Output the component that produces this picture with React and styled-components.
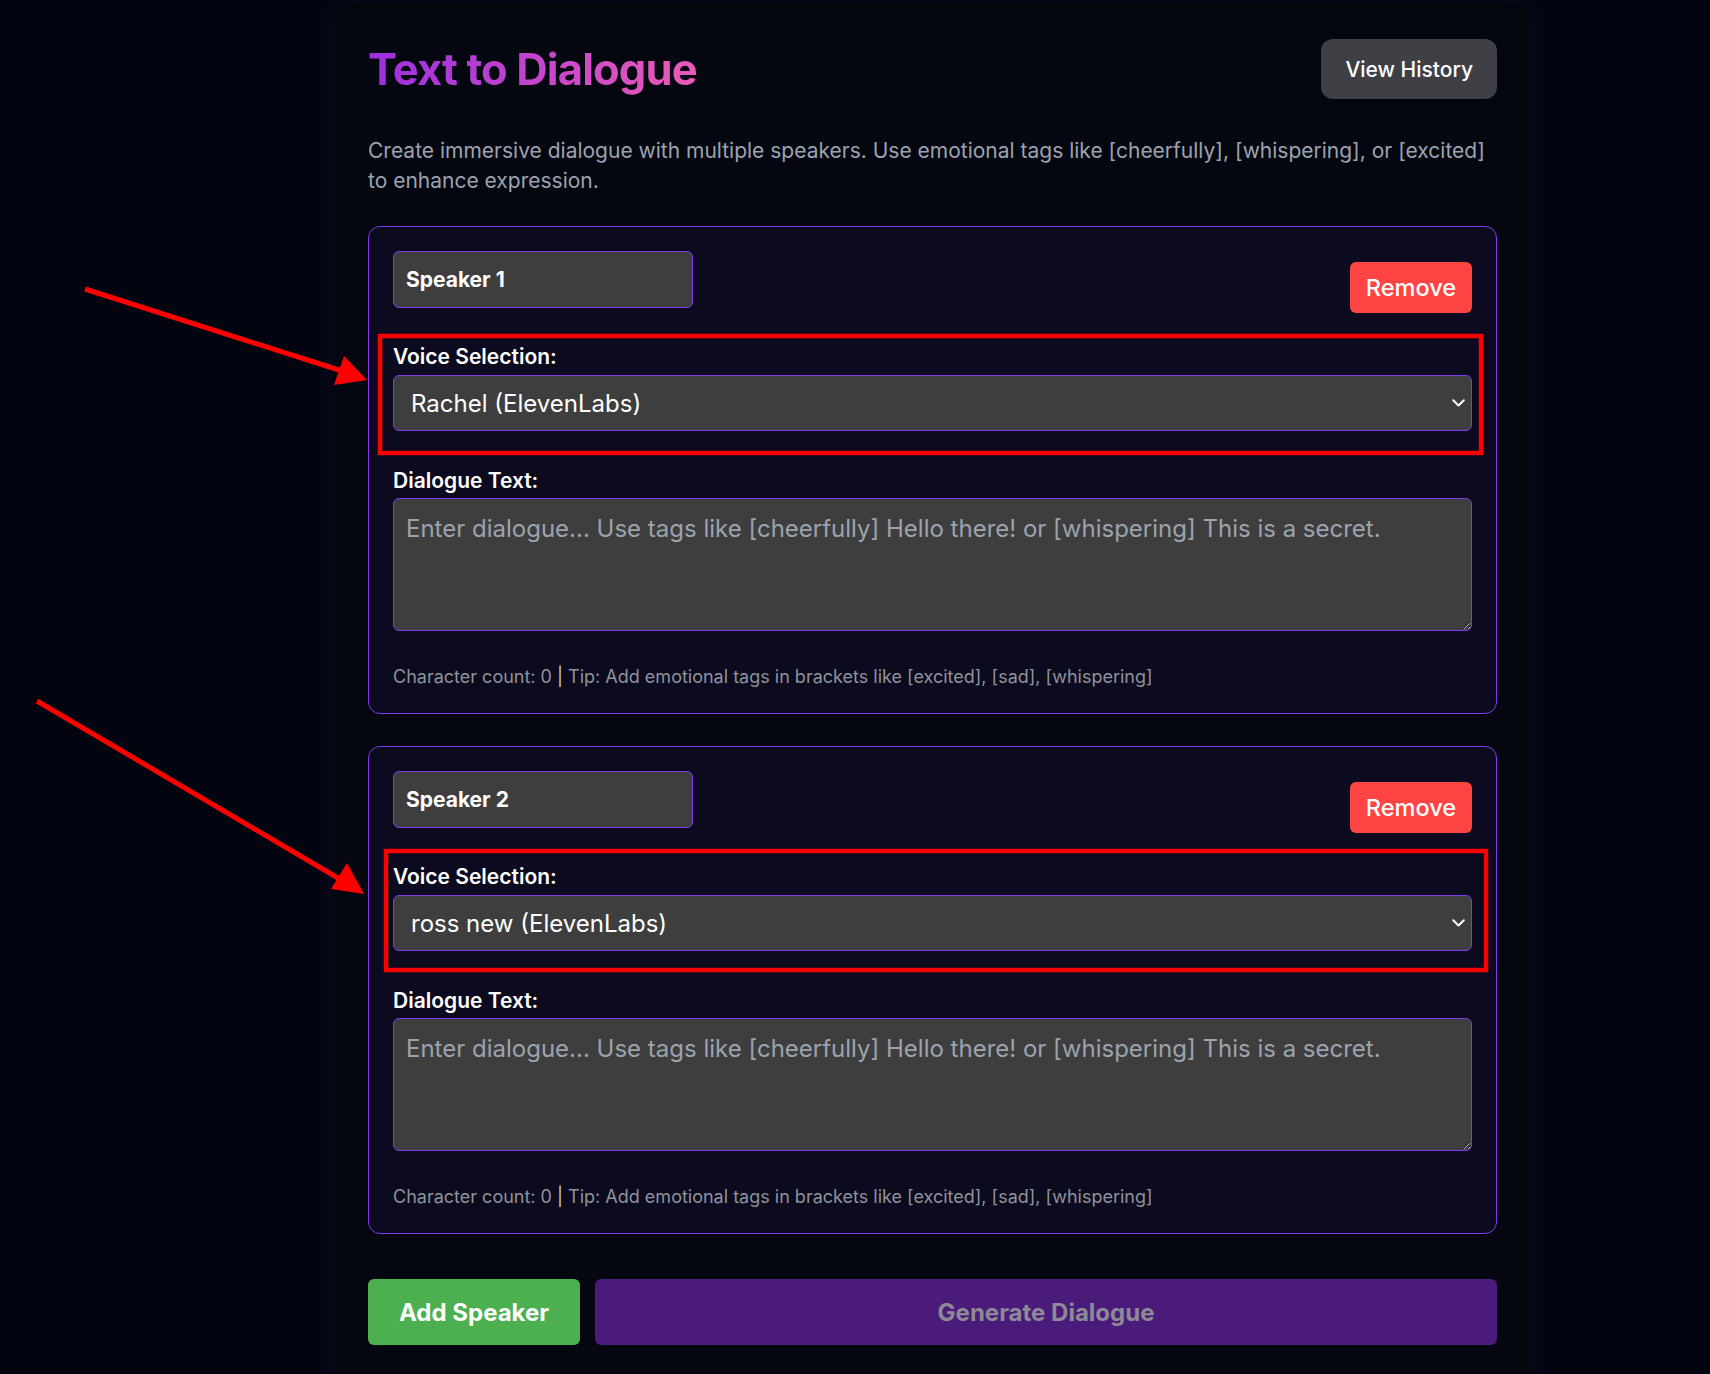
import React, { useState } from 'react'
import styled, { createGlobalStyle } from 'styled-components'

const voices = ['Rachel (ElevenLabs)', 'ross new (ElevenLabs)', 'Adam (ElevenLabs)', 'Bella (ElevenLabs)']
const placeholder = 'Enter dialogue... Use tags like [cheerfully] Hello there! or [whispering] This is a secret.'

function App() {
  const [speakers, setSpeakers] = useState([
    { id: 1, name: 'Speaker 1', voice: voices[0], text: '' },
    { id: 2, name: 'Speaker 2', voice: voices[1], text: '' },
  ])

  const update = (id, key, value) =>
    setSpeakers(speakers.map((s) => (s.id === id ? { ...s, [key]: value } : s)))

  const addSpeaker = () => {
    const id = speakers.length ? Math.max(...speakers.map((s) => s.id)) + 1 : 1
    setSpeakers([...speakers, { id, name: `Speaker ${id}`, voice: voices[0], text: '' }])
  }

  const canGenerate = speakers.some((s) => s.text.trim().length > 0)

  return (
    <Page>
      <GlobalStyle />
      <Panel>
        <Header>
          <Title>Text to Dialogue</Title>
          <HistoryButton>View History</HistoryButton>
        </Header>
        <Intro>
          Create immersive dialogue with multiple speakers. Use emotional tags like [cheerfully], [whispering], or [excited] to enhance expression.
        </Intro>

        {speakers.map((s) => (
          <SpeakerCard key={s.id}>
            <CardHeader>
              <NameInput value={s.name} onChange={(e) => update(s.id, 'name', e.target.value)} />
              <RemoveButton onClick={() => setSpeakers(speakers.filter((x) => x.id !== s.id))}>
                Remove
              </RemoveButton>
            </CardHeader>

            <Field $gap={38}>
              <Label>Voice Selection:</Label>
              <SelectWrap>
                <Select value={s.voice} onChange={(e) => update(s.id, 'voice', e.target.value)}>
                  {voices.map((v) => (
                    <option key={v}>{v}</option>
                  ))}
                </Select>
                <Chevron width="13" height="8" viewBox="0 0 13 8">
                  <path d="M1.2 1.2l5.3 5.3 5.3-5.3" fill="none" stroke="#fff" strokeWidth="2" strokeLinecap="round" strokeLinejoin="round" />
                </Chevron>
              </SelectWrap>
            </Field>

            <Field $gap={0}>
              <Label $tight>Dialogue Text:</Label>
              <TextArea
                placeholder={placeholder}
                value={s.text}
                onChange={(e) => update(s.id, 'text', e.target.value)}
              />
            </Field>

            <CharCount>
              Character count: {s.text.length} <Sep>|</Sep> Tip: Add emotional tags in brackets like [excited], [sad], [whispering]
            </CharCount>
          </SpeakerCard>
        ))}

        <Actions>
          <AddButton onClick={addSpeaker}>Add Speaker</AddButton>
          <GenerateButton disabled={!canGenerate}>Generate Dialogue</GenerateButton>
        </Actions>
      </Panel>

      {/* red annotation marks drawn on top of the screenshot */}
      <Marks viewBox="0 0 1710 1374">
        <rect x="380" y="336" width="1101" height="117" fill="none" stroke="#ff0000" strokeWidth="4.5" />
        <rect x="386" y="851" width="1100" height="119" fill="none" stroke="#ff0000" strokeWidth="4.5" />
        <line x1="85" y1="289" x2="342" y2="371" stroke="#ff0000" strokeWidth="5" />
        <polygon points="367,380 334,385 344,356" fill="#ff0000" />
        <line x1="37" y1="701" x2="343" y2="881" stroke="#ff0000" strokeWidth="5" />
        <polygon points="364,894 331,889 347,863" fill="#ff0000" />
      </Marks>
    </Page>
  )
}

export default App

const GlobalStyle = createGlobalStyle`
  html, body {
    margin: 0;
    padding: 0;
    background: #02050f;
  }
  body {
    font-family: Inter, "Noto Sans", sans-serif;
    color: #fff;
  }
  * {
    box-sizing: border-box;
  }
`

const Page = styled.div`
  position: relative;
  height: 1374px;
  overflow: hidden;
  padding: 2px 0 0 332px;
`

const Panel = styled.div`
  width: 1201px;
  background: #04070f;
  border-radius: 16px;
  padding: 37px 36px 40px;
  box-shadow: 0 0 22px rgba(110, 50, 230, 0.13);
`

const Header = styled.div`
  display: flex;
  align-items: center;
  justify-content: space-between;
  height: 60px;
`

const Title = styled.h1`
  margin: 0;
  font-size: 43.5px;
  font-weight: 700;
  letter-spacing: -0.02em;
  background: linear-gradient(90deg, #9b2fe0, #ec5ab8);
  -webkit-background-clip: text;
  background-clip: text;
  color: transparent;
`

const HistoryButton = styled.button`
  height: 60px;
  padding: 0 24px;
  border: none;
  border-radius: 12px;
  background: #3f3f46;
  color: #fff;
  font-family: inherit;
  font-size: 21px;
  font-weight: 500;
  cursor: pointer;
`

const Intro = styled.p`
  margin: 37px 0 30px;
  font-size: 21px;
  line-height: 30px;
  color: #9ca3af;
`

const SpeakerCard = styled.div`
  border: 1px solid #8338ec;
  border-radius: 12px;
  background: #0b0a1e;
  padding: 24px;
  margin-bottom: 32px;
`

const CardHeader = styled.div`
  display: flex;
  align-items: center;
  justify-content: space-between;
  margin-bottom: 21px;
`

const NameInput = styled.input`
  width: 300px;
  height: 57px;
  margin-bottom: 16px;
  padding: 0 12px;
  border: 1px solid #8338ec;
  border-radius: 6px;
  background: #3e3e3e;
  color: #fff;
  font-family: inherit;
  font-size: 21px;
  font-weight: 700;
  outline: none;
`

const RemoveButton = styled.button`
  height: 51px;
  padding: 0 16px;
  border: none;
  border-radius: 6px;
  background: #ff4444;
  color: #fff;
  font-family: inherit;
  font-size: 23.5px;
  font-weight: 500;
  cursor: pointer;
`

const Field = styled.div`
  display: flex;
  flex-direction: column;
  margin-bottom: ${(p) => p.$gap}px;
`

const Label = styled.label`
  font-size: 21px;
  font-weight: 600;
  line-height: 24px;
  margin-bottom: ${(p) => (p.$tight ? 5 : 6)}px;
`

const SelectWrap = styled.div`
  position: relative;
`

const Select = styled.select`
  width: 100%;
  height: 56px;
  padding: 0 36px 0 17px;
  appearance: none;
  border: 1px solid #8338ec;
  border-radius: 6px;
  background: #3e3e3e;
  color: #fff;
  font-family: inherit;
  font-size: 24px;
  outline: none;
`

const Chevron = styled.svg`
  position: absolute;
  right: 7px;
  top: 24px;
  pointer-events: none;
`

const TextArea = styled.textarea`
  width: 100%;
  height: 133px;
  padding: 15px 12px;
  border: 1px solid #8338ec;
  border-radius: 6px;
  background: #3e3e3e;
  color: #fff;
  font-family: inherit;
  font-size: 24px;
  resize: vertical;
  outline: none;
  color-scheme: dark;

  &::placeholder {
    color: #9ca3af;
  }
`

const CharCount = styled.div`
  margin-top: 34px;
  font-size: 18px;
  line-height: 24px;
  color: #8f939b;
`

const Sep = styled.span`
  color: #c9ccd1;
`

const Actions = styled.div`
  display: flex;
  gap: 15px;
  margin-top: 45px;
`

const AddButton = styled.button`
  height: 66px;
  padding: 0 31px;
  border: none;
  border-radius: 6px;
  background: #4caf50;
  color: #fff;
  font-family: inherit;
  font-size: 24px;
  font-weight: 700;
  cursor: pointer;
`

const GenerateButton = styled.button`
  flex: 1;
  height: 66px;
  border: none;
  border-radius: 6px;
  background: #4a1b7b;
  color: #8d8a95;
  font-family: inherit;
  font-size: 24px;
  font-weight: 700;
  cursor: not-allowed;
`

const Marks = styled.svg`
  position: absolute;
  left: 0;
  top: 0;
  width: 1710px;
  height: 1374px;
  pointer-events: none;
`
